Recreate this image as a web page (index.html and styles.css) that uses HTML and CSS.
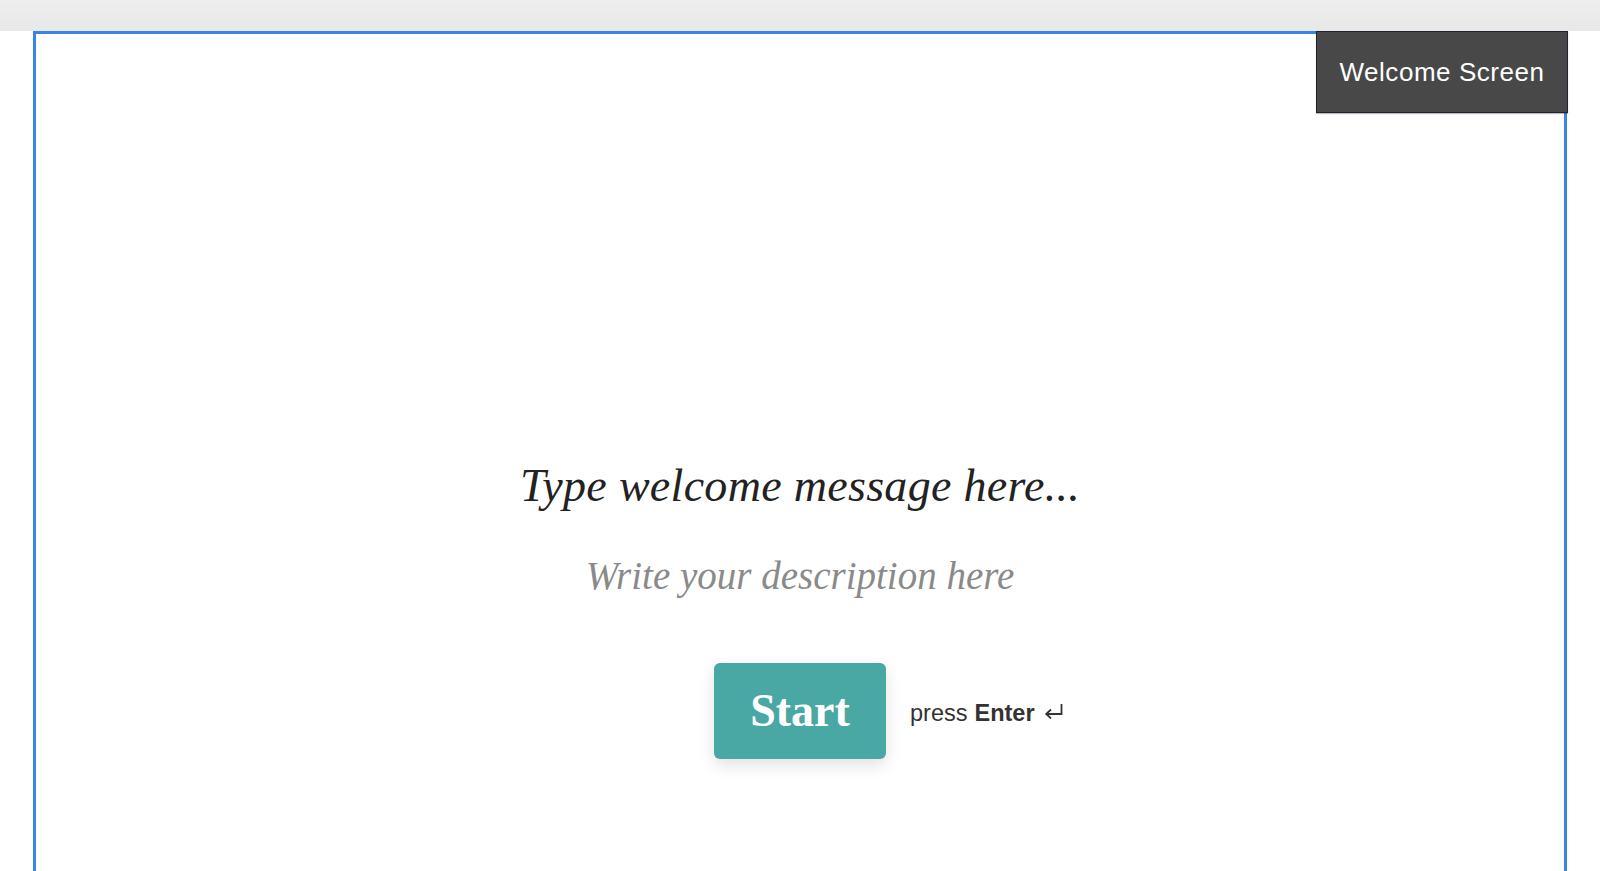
FILE: index.html
```html
<!DOCTYPE html>
<html>
<head>
<meta charset="utf-8">
<link rel="stylesheet" href="styles.css">
</head>
<body>
<div class="topbar"></div>
<div class="frame">
  <div class="label">Welcome Screen</div>
  <div class="content">
    <h1 class="title">Type welcome message here...</h1>
    <p class="desc">Write your description here</p>
    <div class="actions">
      <span></span>
      <button class="start">Start</button>
      <span class="hint">press <b>Enter</b>
        <svg class="enter-icon" width="20" height="16" viewBox="0 0 20 16" fill="none" stroke="#333" stroke-width="1.8">
          <path d="M17.5 1 V11 H2.5"/>
          <path d="M7 6.5 L2.2 11 L7 15.5"/>
        </svg>
      </span>
    </div>
  </div>
</div>
</body>
</html>
```

FILE: styles.css
```css
html, body {
  margin: 0;
  padding: 0;
  background: #ffffff;
  height: 100%;
  overflow: hidden;
}

.topbar {
  height: 31px;
  background: linear-gradient(#eeeeee, #e8e8e8);
}

.frame {
  position: relative;
  margin-left: 33px;
  width: 1528px;
  height: 840px;
  border: 3px solid #3a84e4;
  border-bottom: none;
}

.label {
  position: absolute;
  top: -3px;
  right: -4px;
  width: 250px;
  height: 79px;
  box-sizing: content-box;
  background: #484848;
  border: 1px solid #1f2530;
  box-shadow: 0 1px 1px rgba(0, 0, 0, 0.25);
  color: #ffffff;
  font-family: "Liberation Sans", Arial, sans-serif;
  font-size: 26px;
  letter-spacing: 0.55px;
  display: flex;
  align-items: center;
  justify-content: center;
  padding-top: 1px;
}

.content {
  display: flex;
  flex-direction: column;
  align-items: center;
  padding-top: 424px;
}

.title {
  margin: 0;
  font-family: "Liberation Serif", "Times New Roman", serif;
  font-style: italic;
  font-weight: normal;
  font-size: 46px;
  line-height: 56px;
  color: #222222;
  letter-spacing: 0.3px;
}

.desc {
  margin: 39px 0 0 0;
  font-family: "Liberation Serif", "Times New Roman", serif;
  font-style: italic;
  font-size: 39px;
  line-height: 46px;
  color: #8a8a8a;
}

.actions {
  margin-top: 64px;
  width: 100%;
  display: grid;
  grid-template-columns: 1fr auto 1fr;
  align-items: center;
}

.start {
  width: 172px;
  height: 96px;
  border: none;
  border-radius: 6px;
  background: #4aa8a4;
  color: #ffffff;
  font-family: "Liberation Serif", "Times New Roman", serif;
  font-weight: bold;
  font-size: 46px;
  line-height: 96px;
  padding: 0;
  box-shadow: 0 6px 16px rgba(0, 0, 0, 0.12);
}

.hint {
  margin-left: 24px;
  margin-top: 5px;
  font-family: "Liberation Sans", Arial, sans-serif;
  font-size: 23.5px;
  color: #333333;
  display: flex;
  align-items: center;
  gap: 9px;
  white-space: nowrap;
}

.hint b {
  font-weight: bold;
  margin-left: -2px;
}

.enter-icon {
  margin-top: -6px;
}
```
